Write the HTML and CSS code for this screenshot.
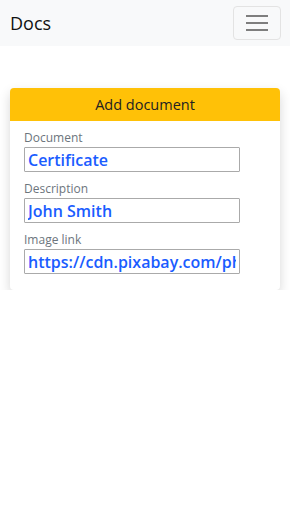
FILE: index.html
```html
<!DOCTYPE html>
<html>
<head>
<meta charset="utf-8">
<link rel="stylesheet" href="styles.css">
</head>
<body>
<nav class="navbar">
  <span class="brand">Docs</span>
  <button class="toggler" aria-label="menu">
    <svg width="22" height="18" viewBox="0 0 22 18"><path d="M0 2h22M0 9h22M0 16h22" stroke="#555" stroke-width="1.6"/></svg>
  </button>
</nav>
<main class="content">
  <section class="card">
    <header class="card-header">Add document</header>
    <div class="card-body">
      <label class="field">
        <span class="label">Document</span>
        <input class="input" value="Certificate">
      </label>
      <label class="field">
        <span class="label">Description</span>
        <input class="input" value="John Smith">
      </label>
      <label class="field">
        <span class="label">Image link</span>
        <input class="input" value="https://cdn.pixabay.com/photo/2017/certificate.png">
      </label>
    </div>
  </section>
</main>
</body>
</html>
```
FILE: styles.css
```css
* { box-sizing: border-box; }
html, body { margin: 0; padding: 0; background: #fff; }
body { font-family: "Open Sans", "Noto Sans", sans-serif; color: #212529; }
.navbar {
  height: 46px;
  background: #f8f9fa;
  display: flex;
  align-items: center;
  justify-content: space-between;
  padding: 0 9px 0 10px;
}
.brand { font-size: 18px; color: #111; }
.toggler {
  width: 48px; height: 34px;
  background: transparent;
  border: 1px solid #e3e3e3;
  border-radius: 4px;
  display: flex; align-items: center; justify-content: center;
  padding: 0;
}
.content { padding: 42px 10px 0 10px; }
.card {
  border-radius: 4px;
  background: #fff;
  box-shadow: 0 5px 12px rgba(0,0,0,0.16);
}
.card-header {
  height: 33px;
  background: #ffc107;
  border-radius: 4px 4px 0 0;
  display: flex; align-items: center; justify-content: center;
  font-size: 14.5px;
  color: #222;
}
.card-body { padding: 8px 40px 16px 14px; display: flex; flex-direction: column; gap: 8px; }
.field { display: flex; flex-direction: column; }
.label { font-size: 12px; color: #6c757d; line-height: 18px; }
.input {
  width: 216px; height: 25px;
  border: 1px solid #aaa;
  border-radius: 1px;
  padding: 0 3px;
  font-family: "Open Sans", "Noto Sans", sans-serif;
  font-size: 16px;
  font-weight: 600;
  color: #1a5cff;
  background: #fff;
  outline: none;
}
```
